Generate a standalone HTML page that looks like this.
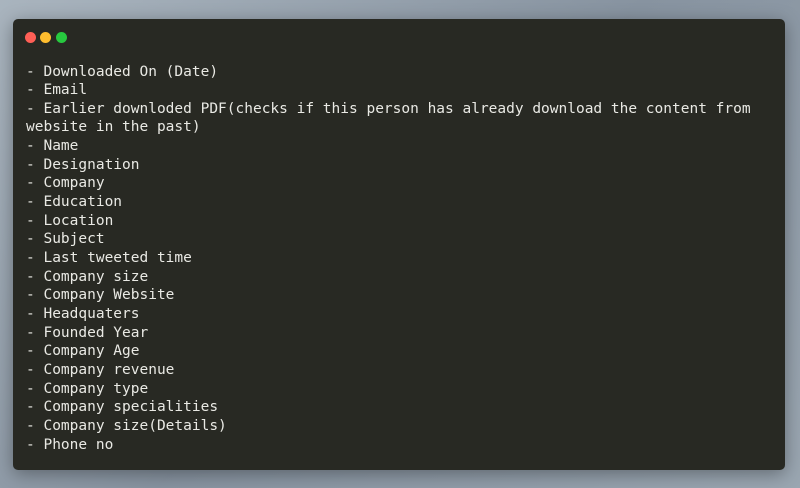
<!DOCTYPE html>
<html><head><meta charset="utf-8"><style>
html,body{margin:0;padding:0;width:800px;height:488px;overflow:hidden;background:linear-gradient(135deg,#a9b4be 0%,#8793a0 50%,#9aa6b1 100%);}
.win{position:absolute;left:13px;top:19px;width:772px;height:451px;background:#282923;border-radius:5px;box-shadow:0 4px 18px rgba(0,0,0,0.35);}
.dot{position:absolute;top:12.5px;width:11px;height:11px;border-radius:50%;}
pre{position:absolute;left:13px;top:43.5px;margin:0;font-family:"DejaVu Sans Mono","Liberation Mono",monospace;font-size:14.5px;line-height:18.65px;color:#e9e9e4;}
</style></head><body>
<div class="win">
<div class="dot" style="left:11.5px;background:#ff5f56"></div>
<div class="dot" style="left:27px;background:#ffbd2e"></div>
<div class="dot" style="left:42.5px;background:#27c93f"></div>
<pre>- Downloaded On (Date)
- Email
- Earlier downloded PDF(checks if this person has already download the content from
website in the past)
- Name
- Designation
- Company
- Education
- Location
- Subject
- Last tweeted time
- Company size
- Company Website
- Headquaters
- Founded Year
- Company Age
- Company revenue
- Company type
- Company specialities
- Company size(Details)
- Phone no</pre>
</div>
</body></html>
